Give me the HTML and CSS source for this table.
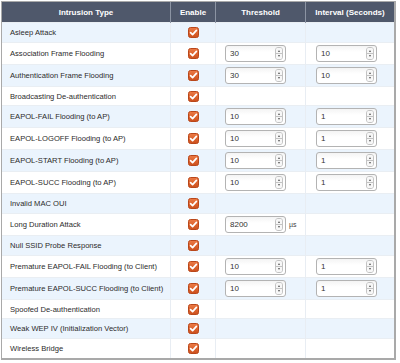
FILE: index.html
```html
<!DOCTYPE html>
<html lang="en">
<head>
    <meta charset="UTF-8">
    <title>Intrusion Detection</title>
    <link rel="stylesheet" href="styles.css">
</head>
<body>
    <div class="panel">
        <table class="ids-table">
            <thead>
                <tr>
                    <th class="col-type">Intrusion Type</th>
                    <th class="col-enable">Enable</th>
                    <th class="col-threshold">Threshold</th>
                    <th class="col-interval">Interval (Seconds)</th>
                </tr>
            </thead>
            <tbody id="ids-body"></tbody>
        </table>
    </div>

    <script>
        // Intrusion types: [name, threshold, interval, unit]
        const rows = [
            ['Asleep Attack'],
            ['Association Frame Flooding', '30', '10'],
            ['Authentication Frame Flooding', '30', '10'],
            ['Broadcasting De-authentication'],
            ['EAPOL-FAIL Flooding (to AP)', '10', '1'],
            ['EAPOL-LOGOFF Flooding (to AP)', '10', '1'],
            ['EAPOL-START Flooding (to AP)', '10', '1'],
            ['EAPOL-SUCC Flooding (to AP)', '10', '1'],
            ['Invalid MAC OUI'],
            ['Long Duration Attack', '8200', null, '\u00b5s'],
            ['Null SSID Probe Response'],
            ['Premature EAPOL-FAIL Flooding (to Client)', '10', '1'],
            ['Premature EAPOL-SUCC Flooding (to Client)', '10', '1'],
            ['Spoofed De-authentication'],
            ['Weak WEP IV (Initialization Vector)'],
            ['Wireless Bridge']
        ];

        const checkSvg =
            '<svg class="check" width="11" height="11" viewBox="0 0 11 11">' +
            '<defs><linearGradient id="cb" x1="0" y1="0" x2="0" y2="1">' +
            '<stop offset="0" stop-color="#ec7a45"/><stop offset="1" stop-color="#cc4f1c"/>' +
            '</linearGradient></defs>' +
            '<rect x="0.5" y="0.5" width="10" height="10" rx="2" fill="url(#cb)" stroke="#b9471a"/>' +
            '<path d="M2.6 5.6 L4.6 7.6 L8.4 3.4" fill="none" stroke="#fff" stroke-width="1.7" stroke-linecap="round" stroke-linejoin="round"/>' +
            '</svg>';

        function spinBox(value) {
            return '<div class="spin-box"><span class="spin-value">' + value + '</span>' +
                '<span class="spinner"><span class="spin-up"></span><span class="spin-down"></span></span></div>';
        }

        const body = document.getElementById('ids-body');
        rows.forEach(function (r, i) {
            const tr = document.createElement('tr');
            tr.className = (i % 2 === 0 ? 'row-odd' : 'row-even') + (r[1] ? ' has-input' : '');
            let html = '<td class="col-type">' + r[0] + '</td>';
            html += '<td class="col-enable">' + checkSvg + '</td>';
            html += '<td class="col-threshold">';
            if (r[1]) {
                html += '<div class="field">' + spinBox(r[1]);
                if (r[3]) html += '<span class="unit">' + r[3] + '</span>';
                html += '</div>';
            }
            html += '</td><td class="col-interval">';
            if (r[2]) html += '<div class="field">' + spinBox(r[2]) + '</div>';
            html += '</td>';
            tr.innerHTML = html;
            body.appendChild(tr);
        });
    </script>
</body>
</html>
```

FILE: styles.css
```css
body {
    margin: 0;
    background: #fff;
    font-family: "Liberation Sans", Arial, sans-serif;
    font-size: 7.6px;
    color: #2b2b2b;
}
.panel {
    margin: 1px 0 0 1px;
    width: 395px;
    border: 1px solid #a9a9a9;
    border-right-width: 2px;
    border-bottom-width: 2px;
    box-sizing: border-box;
}
.ids-table {
    width: 100%;
    border-collapse: collapse;
    table-layout: fixed;
}
.ids-table th {
    background: #4f586b;
    color: #fff;
    font-weight: bold;
    font-size: 8px;
    height: 20px;
    padding: 0;
    text-align: center;
    border-left: 1px solid #8c94a3;
}
.ids-table th:first-child {
    border-left: none;
}
.ids-table td {
    padding: 0;
    height: 18.7px;
    white-space: nowrap;
    border-left: 1px solid #e8edf3;
    border-top: 1px solid #e9eef3;
}
.ids-table td:first-child {
    border-left: none;
}
.ids-table tr.has-input td {
    height: 21px;
}
.row-odd td {
    background: #ebf4fd;
}
.row-even td {
    background: #fff;
}
.col-type {
    width: 168px;
}
.ids-table td.col-type {
    padding-left: 8px;
}
.col-enable {
    width: 44px;
    text-align: center;
}
.col-threshold {
    width: 89px;
}
.col-enable .check {
    display: block;
    margin: 0 auto;
}
.field {
    display: flex;
    align-items: center;
    padding-left: 9px;
}
.col-interval .field {
    padding-left: 10px;
}
.spin-box {
    width: 61px;
    height: 17px;
    box-sizing: border-box;
    border: 1px solid #b3b3b3;
    border-radius: 3px;
    background: linear-gradient(#f4f4f4, #fff 40%);
    display: flex;
    align-items: center;
    justify-content: space-between;
    padding: 0 2px 0 4px;
}
.spin-value {
    font-size: 8px;
    color: #333;
}
.spinner {
    display: flex;
    flex-direction: column;
    width: 8px;
    height: 13px;
    border: 1px solid #c3c3c3;
    border-radius: 3px;
    box-sizing: border-box;
    overflow: hidden;
}
.spin-up,
.spin-down {
    flex: 1;
    position: relative;
    background: #f7f7f7;
}
.spin-up {
    border-bottom: 1px solid #c3c3c3;
}
.spin-up::after,
.spin-down::after {
    content: "";
    position: absolute;
    left: 2px;
    border-left: 1px solid transparent;
    border-right: 1px solid transparent;
}
.spin-up::after {
    top: 2px;
    border-bottom: 2px solid #555;
}
.spin-down::after {
    top: 1px;
    border-top: 2px solid #555;
}
.unit {
    margin-left: 3px;
    font-size: 7px;
    color: #444;
}
```
